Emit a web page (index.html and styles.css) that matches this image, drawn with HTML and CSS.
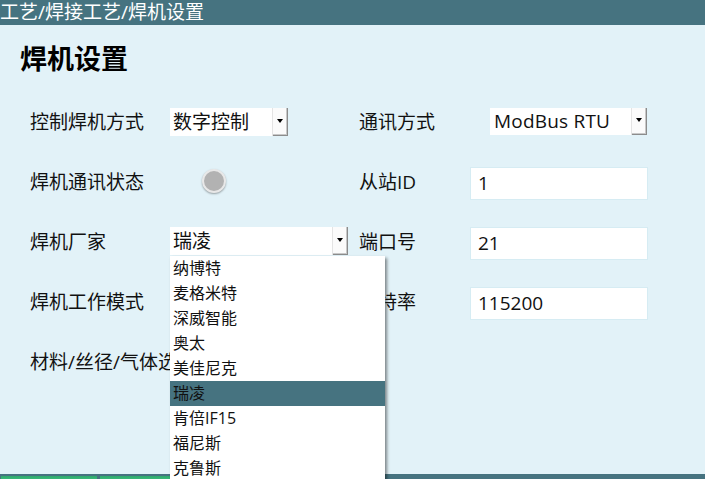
FILE: index.html
```html
<!DOCTYPE html>
<html lang="zh-CN">
<head>
<meta charset="utf-8">
<title>焊机设置</title>
<link rel="stylesheet" href="styles.css">
</head>
<body>
<div class="page">
  <div class="header">工艺/焊接工艺/焊机设置</div>
  <div class="main">
    <h1 class="title">焊机设置</h1>
    <div class="form">
      <div class="label">控制焊机方式</div>
      <div class="cell">
        <div class="select sel-mode"><span class="sel-text">数字控制</span><span class="arrow-btn"><span class="arrow"></span></span></div>
      </div>
      <div class="label">通讯方式</div>
      <div class="cell">
        <div class="select sel-comm"><span class="sel-text">ModBus RTU</span><span class="arrow-btn"><span class="arrow"></span></span></div>
      </div>

      <div class="label">焊机通讯状态</div>
      <div class="cell"><span class="led"></span></div>
      <div class="label">从站ID</div>
      <div class="cell"><div class="input">1</div></div>

      <div class="label">焊机厂家</div>
      <div class="cell">
        <div class="select sel-maker"><span class="sel-text">瑞凌</span><span class="arrow-btn"><span class="arrow"></span></span>
          <ul class="dropdown">
            <li>纳博特</li>
            <li>麦格米特</li>
            <li>深威智能</li>
            <li>奥太</li>
            <li>美佳尼克</li>
            <li class="active">瑞凌</li>
            <li>肯倍IF15</li>
            <li>福尼斯</li>
            <li>克鲁斯</li>
          </ul>
        </div>
      </div>
      <div class="label">端口号</div>
      <div class="cell"><div class="input">21</div></div>

      <div class="label">焊机工作模式</div>
      <div class="cell"></div>
      <div class="label label-hidden">波特率</div>
      <div class="cell"><div class="input">115200</div></div>

      <div class="label label-clip">材料/丝径/气体选择</div>
      <div class="cell"></div>
      <div class="label"></div>
      <div class="cell"></div>
    </div>
  </div>
  <div class="footer">
    <span class="gbtn"></span>
    <span class="gbtn"></span>
  </div>
</div>
</body>
</html>
```

FILE: styles.css
```css
html, body {
  margin: 0;
  padding: 0;
}
body {
  font-family: "Open Sans", "Noto Sans CJK SC", sans-serif;
  color: #111;
  background: #e2f2f8;
}
.page {
  width: 705px;
  height: 479px;
  overflow: hidden;
  display: flex;
  flex-direction: column;
}
.header {
  height: 25px;
  flex: none;
  background: #467380;
  color: #fff;
  font-size: 19px;
  line-height: 25px;
  white-space: nowrap;
}
.main {
  height: 449px;
  flex: none;
  background: #e2f2f8;
}
.title {
  margin: 0;
  padding: 16px 0 0 20px;
  font-size: 27px;
  font-weight: bold;
  line-height: 36px;
  color: #000;
}
.form {
  margin-top: 15px;
  padding-left: 30px;
  display: grid;
  grid-template-columns: 140px 189px 111px 1fr;
  grid-auto-rows: 60px;
}
.label {
  display: flex;
  align-items: center;
  font-size: 19px;
  line-height: 24px;
  white-space: nowrap;
  color: #111;
}
.label-clip {
  overflow: hidden;
}
.cell {
  display: flex;
  align-items: center;
  position: relative;
}
.select {
  position: relative;
  display: flex;
  align-items: center;
  background: #fff;
  height: 28px;
  font-size: 19px;
  box-sizing: border-box;
}
.sel-text {
  flex: 1;
  padding-left: 3px;
  line-height: 28px;
  white-space: nowrap;
}
.sel-mode { width: 118px; }
.sel-comm { width: 157px; height: 27px; margin-left: 20px; margin-top: -2px; }
.sel-comm .sel-text { padding-left: 4px; letter-spacing: 0.2px; }
.sel-maker { width: 178px; margin-top: -2px; }
.arrow-btn {
  align-self: stretch;
  width: 16px;
  box-sizing: border-box;
  background: #fbfbfb;
  border-left: 1px solid #e4e4e4;
  box-shadow: inset -1px -1px 0 #8c8c8c, inset -2px -2px 0 #c8c8c8;
  display: flex;
  align-items: center;
  justify-content: center;
}
.arrow {
  width: 0;
  height: 0;
  border-left: 3.5px solid transparent;
  border-right: 3.5px solid transparent;
  border-top: 4px solid #000;
  margin: -2px 1px 0 0;
}
.led {
  width: 24px;
  height: 24px;
  box-sizing: border-box;
  border-radius: 50%;
  margin-left: 32px;
  margin-top: -3px;
  background: #b2b2b2;
  border: 2px solid #e8e8e8;
  box-shadow: 0 1px 2px rgba(0,0,0,0.35);
}
.input {
  width: 178px;
  height: 33px;
  box-sizing: border-box;
  margin-top: 3px;
  background: #fff;
  border: 1px solid #d6ecf3;
  padding-left: 7px;
  font-size: 19px;
  line-height: 31px;
}
.dropdown {
  position: absolute;
  left: 0;
  top: calc(100% + 1px);
  width: 215px;
  margin: 0;
  padding: 0;
  list-style: none;
  background: #fff;
  box-shadow: 2px 2px 3px rgba(0,0,0,0.45);
  z-index: 10;
}
.dropdown li {
  height: 25px;
  line-height: 25px;
  padding-left: 3px;
  font-size: 16px;
  color: #111;
  white-space: nowrap;
}
.dropdown li.active {
  background: #467380;
}
.footer {
  height: 40px;
  flex: none;
  background: #467380;
  display: flex;
  gap: 3px;
  padding: 2px 0 0 1px;
  box-sizing: border-box;
}
.gbtn {
  width: 96px;
  height: 30px;
  background: linear-gradient(#2fa86c, #3dbd7c 4px);
}
```
